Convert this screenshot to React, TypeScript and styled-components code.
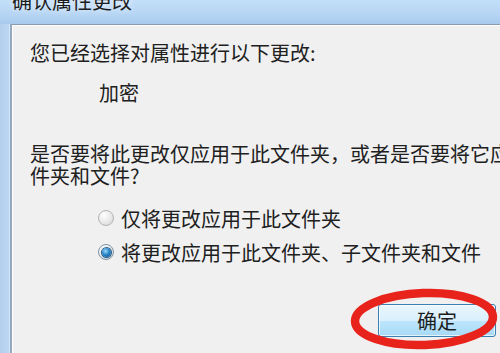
import React from "react";
import styled, { createGlobalStyle } from "styled-components";

const Global = createGlobalStyle`
  html, body { margin: 0; padding: 0; }
  body {
    width: 500px;
    height: 353px;
    overflow: hidden;
    background: #f0f0f0;
    font-family: "Noto Sans CJK SC", "Noto Sans", sans-serif;
  }
`;

const Window = styled.div`
  position: relative;
  width: 620px;
  height: 353px;
  display: flex;
  flex-direction: column;
  overflow: hidden;
`;

const TitleBar = styled.div`
  height: 24px;
  flex: none;
  display: flex;
  align-items: flex-start;
  padding-left: 12px;
  background: linear-gradient(#c3def8, #b3d3f3 70%, #a9c9ec);
  overflow: hidden;
`;

const Title = styled.div`
  margin-top: -9px;
  font-size: 20px;
  line-height: 20px;
  color: #1c1c1c;
  text-shadow: 0 0 6px rgba(255, 255, 255, 0.9);
`;

const Body = styled.div`
  flex: 1;
  display: flex;
  min-height: 0;
`;

const SideFrame = styled.div`
  width: 10px;
  flex: none;
  background: linear-gradient(90deg, #b3cfee, #bcd7f3);
  border-right: 1px solid #8ea8c5;
  box-shadow: inset -1px 0 0 #d6e6f7;
`;

const Content = styled.div`
  flex: 1;
  background: #f0f0f0;
  border-top: 1px solid #8a9bb0;
  border-left: 1px solid #9aa9ba;
  box-shadow: inset 1px 1px 0 #ffffff;
  padding: 17px 0 0 18px;
  display: flex;
  flex-direction: column;
  align-items: flex-start;
  color: #202020;
  font-size: 20px;
`;

const Line = styled.div<{ $indent?: number; $gap?: number }>`
  line-height: 22px;
  white-space: nowrap;
  margin-left: ${(p) => p.$indent ?? 0}px;
  margin-top: ${(p) => p.$gap ?? 0}px;
`;

const Question = styled.div`
  margin-top: 39px;
  line-height: 22px;
  white-space: nowrap;
`;

const RadioRow = styled.div<{ $gap: number }>`
  display: flex;
  align-items: center;
  gap: 7px;
  height: 22px;
  margin-left: 68px;
  margin-top: ${(p) => p.$gap}px;
  white-space: nowrap;
`;

const RadioCircle = styled.span<{ $checked?: boolean }>`
  width: 16px;
  height: 16px;
  box-sizing: border-box;
  border-radius: 50%;
  border: 1px solid ${(p) => (p.$checked ? "#7f95a8" : "#b4b4b4")};
  background: radial-gradient(circle at 35% 30%, #ffffff, #e6e6e6 60%, #d2d2d2);
  display: flex;
  align-items: center;
  justify-content: center;
  flex: none;

  &::after {
    content: "";
    display: ${(p) => (p.$checked ? "block" : "none")};
    width: 9px;
    height: 9px;
    border-radius: 50%;
    background: radial-gradient(circle at 40% 35%, #9fdcff, #2a86c8 45%, #0b4f8c);
    box-shadow: 0 0 0 1px #2c5f8c;
  }
`;

const ButtonRow = styled.div`
  margin-top: 41px;
  padding-left: 348px;
`;

const OkButton = styled.button`
  width: 118px;
  height: 33px;
  border: 1px solid #3c7fb1;
  border-radius: 3px;
  background: linear-gradient(#eaf6fd, #d9f0fc 50%, #bee6fd 50%, #a7d9f5);
  box-shadow: inset 0 0 0 1px rgba(255, 255, 255, 0.7);
  font-family: "Noto Sans CJK SC", sans-serif;
  font-size: 20px;
  line-height: 20px;
  color: #1e1e1e;
  padding: 0;
`;

const Annotation = styled.svg`
  position: absolute;
  left: 349px;
  top: 287px;
  width: 150px;
  height: 64px;
  overflow: visible;
`;

export default function App() {
  return (
    <>
      <Global />
      <Window>
        <TitleBar>
          <Title>确认属性更改</Title>
        </TitleBar>
        <Body>
          <SideFrame />
          <Content>
            <Line>您已经选择对属性进行以下更改:</Line>
            <Line $indent={69} $gap={18}>
              加密
            </Line>
            <Question>
              是否要将此更改仅应用于此文件夹，或者是否要将它应用于所有子文
              <br />
              件夹和文件?
            </Question>
            <RadioRow $gap={20}>
              <RadioCircle />
              <span>仅将更改应用于此文件夹</span>
            </RadioRow>
            <RadioRow $gap={12}>
              <RadioCircle $checked />
              <span>将更改应用于此文件夹、子文件夹和文件</span>
            </RadioRow>
            <ButtonRow>
              <OkButton>确定</OkButton>
            </ButtonRow>
          </Content>
        </Body>
        <Annotation viewBox="0 0 150 64">
          <ellipse
            cx="75"
            cy="32"
            rx="69"
            ry="26"
            fill="none"
            stroke="#e8231c"
            strokeWidth="8.5"
            transform="rotate(-2 75 32)"
          />
        </Annotation>
      </Window>
    </>
  );
}
